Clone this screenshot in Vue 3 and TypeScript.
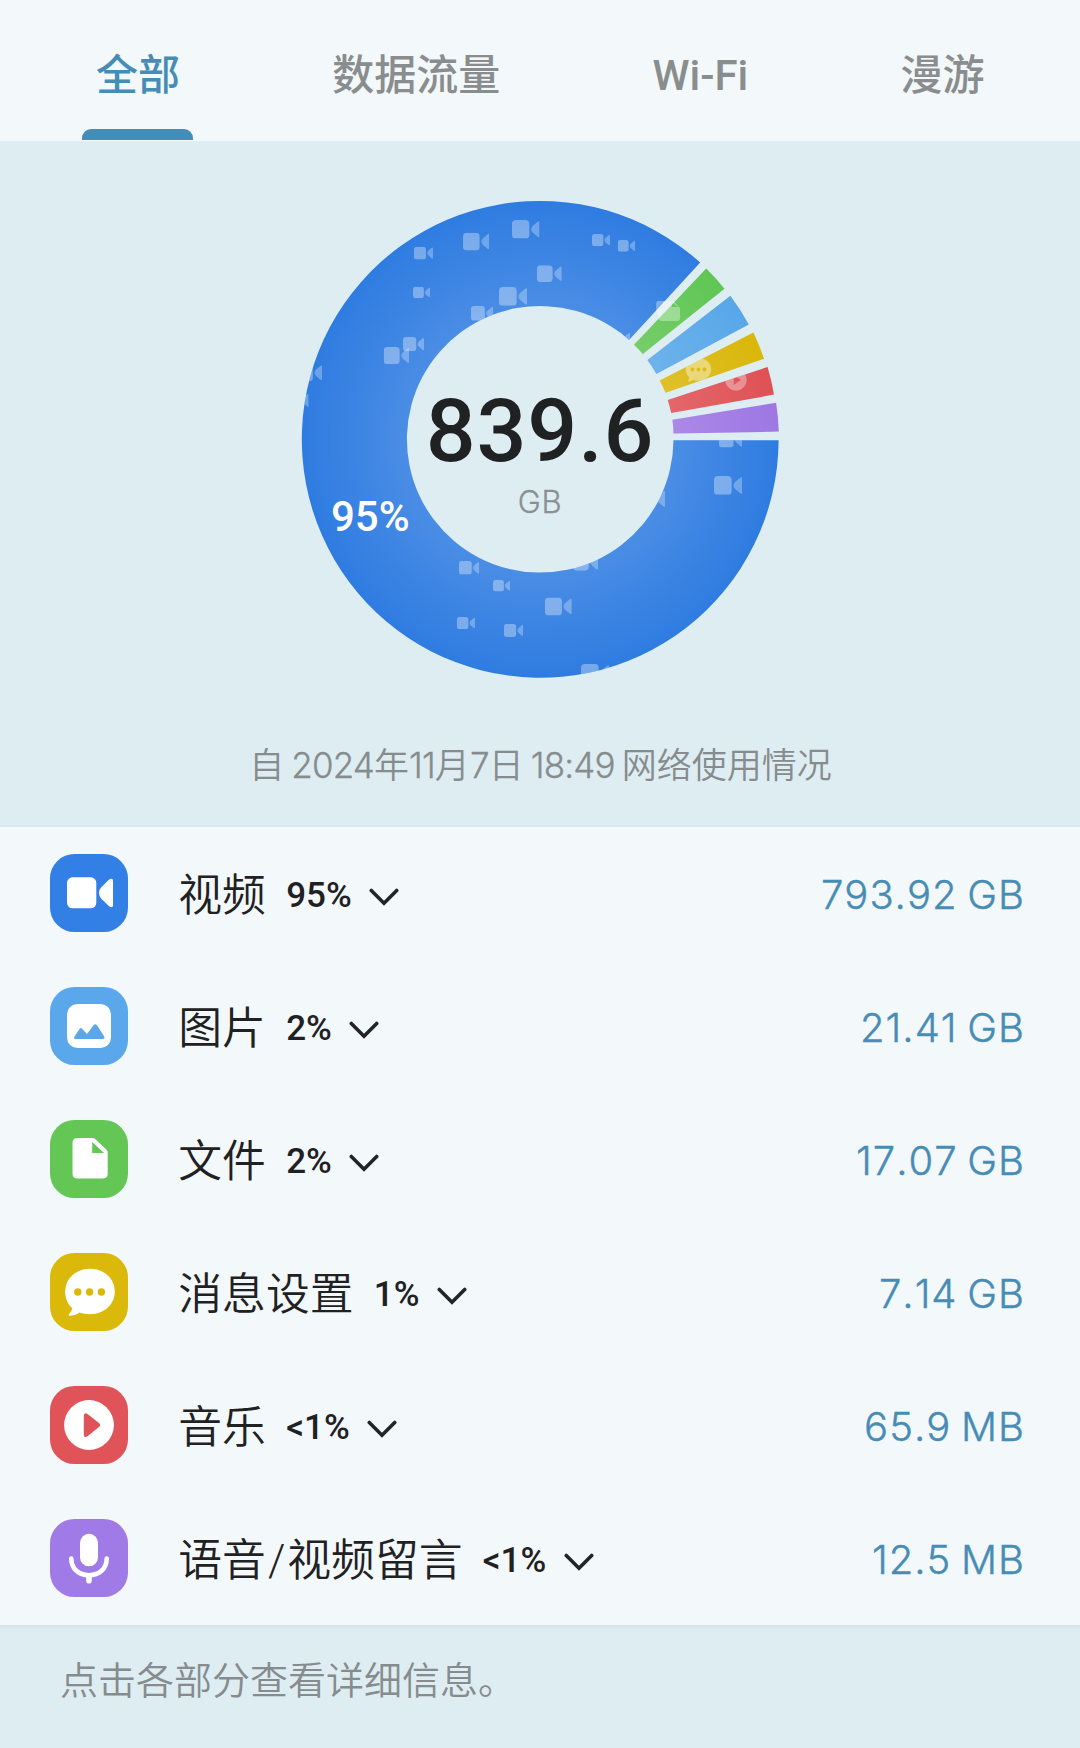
<script setup lang="ts">
type IconName = 'video' | 'image' | 'file' | 'message' | 'music' | 'voice'

interface UsageRow {
  icon: IconName
  name: string
  percent: string
  amount: string
  color: string
}

const tabs: string[] = ['全部', '数据流量', 'Wi-Fi', '漫游']

const rows: UsageRow[] = [
  { icon: 'video', name: '视频', percent: '95%', amount: '793.92 GB', color: '#327fe5' },
  { icon: 'image', name: '图片', percent: '2%', amount: '21.41 GB', color: '#5aa8eb' },
  { icon: 'file', name: '文件', percent: '2%', amount: '17.07 GB', color: '#63c655' },
  { icon: 'message', name: '消息设置', percent: '1%', amount: '7.14 GB', color: '#dbb90a' },
  { icon: 'music', name: '音乐', percent: '<1%', amount: '65.9 MB', color: '#e05459' },
  { icon: 'voice', name: '语音/视频留言', percent: '<1%', amount: '12.5 MB', color: '#a07be7' },
]

const period = '自 2024年11月7日 18:49 网络使用情况'

// Numerals are set slightly tighter than the Chinese text around them
const periodParts: string[] = period.split(/([\d:]+)/)
const nameParts = (name: string): string[] => name.split(/(\/)/)

// Chart space is centred on the ring: outer radius 238.4, inner radius 133.3
const slices = [
  { id: 'video', color: '#2f7ce1', d: 'M238.4 .8A238.4 238.4 0 1 1 160 -176.8L88.8 -99.5A133.3 133.3 0 1 0 133.3 .8Z' },
  { id: 'file', color: '#60c653', d: 'M93.8 -94.7L166 -170.8A238.4 238.4 0 0 1 184.3 -150.7L102.6 -85.4A133.3 133.3 0 0 0 93.8 -94.7Z' },
  { id: 'image', color: '#58a7e9', d: 'M107.2 -79.4L190.2 -143.7A238.4 238.4 0 0 1 208.6 -114.9L116.2 -65.4A133.3 133.3 0 0 0 107.2 -79.4Z' },
  { id: 'message', color: '#dab70a', d: 'M119.5 -59L213.2 -106.8A238.4 238.4 0 0 1 223.9 -80.6L125.3 -46.7A133.3 133.3 0 0 0 119.5 -59Z' },
  { id: 'music', color: '#df5155', d: 'M127.5 -39.4L227.4 -72.4A238.4 238.4 0 0 1 233.8 -44.8L131 -26.4A133.3 133.3 0 0 0 127.5 -39.4Z' },
  { id: 'voice', color: '#9e77e4', d: 'M132.2 -19.6L235.9 -36.6A238.4 238.4 0 0 1 238.6 -7.8L133.3 -5.8A133.3 133.3 0 0 0 132.2 -19.6Z' },
]

// [left, top, width] of each camera scattered over the blue slice
const cameras: [number, number, number][] = [
  [414, 246.7, 19], [463, 232.7, 26.3], [512, 220, 27.5], [413, 286.7, 17.2],
  [471, 306, 22], [499, 287, 28], [537, 265.3, 24.8], [592, 234, 18],
  [617.7, 240, 17.4], [403, 337, 21], [383.7, 347, 25.3], [297.3, 364.5, 24.7],
  [286.7, 393, 22], [609, 332, 21], [719, 432, 23], [714, 476, 28],
  [638, 489.8, 27], [573, 553.8, 25], [545, 597.4, 26.8], [581, 664, 28],
  [459, 561, 20.2], [493, 580, 17.2], [457, 617, 18], [504, 624, 19.2],
]
</script>

<template>
  <main class="screen">
    <svg class="defs" width="0" height="0" aria-hidden="true">
      <defs>
        <symbol id="cam" viewBox="0 0 46 31">
          <rect width="29" height="31" rx="6.500" />
          <path opacity=".85" d="M42.500 3.200Q46 .5 46 4V27Q46 30.500 42.500 27.800L35 21.500Q32 19 32 15.500Q32 12 35 9.500Z" />
        </symbol>
      </defs>
    </svg>

    <nav class="tabs">
      <div v-for="(tab, i) in tabs" :key="tab" class="tab" :class="{ active: i === 0 }">{{ tab }}</div>
    </nav>

    <section class="summary">
      <div class="chart">
        <svg class="ring" viewBox="-240.2 -240.4 480 480" width="480" height="480">
          <defs>
            <radialGradient id="glow" gradientUnits="userSpaceOnUse" cx="0" cy="0" r="238.4">
              <stop offset=".56" stop-color="#fff" stop-opacity=".13" />
              <stop offset="1" stop-color="#fff" stop-opacity="0" />
            </radialGradient>
            <clipPath v-for="s in slices" :id="'clip-' + s.id" :key="s.id"><path :d="s.d" /></clipPath>
          </defs>
          <g v-for="s in slices" :key="s.id">
            <path :d="s.d" :fill="s.color" />
            <path :d="s.d" fill="url(#glow)" />
          </g>
          <g clip-path="url(#clip-video)" fill="#fff" fill-opacity=".34">
            <use
              v-for="(c, i) in cameras" :key="i" href="#cam"
              :x="c[0] - 540.2" :y="c[1] - 439.4" :width="c[2]" :height="c[2] * 0.674"
            />
          </g>
          <path
            fill="#fff" fill-opacity=".34" fill-rule="evenodd"
            d="M118.500 -138.400H133L139.800 -131.500V-121.400Q139.800 -118.400 136.800 -118.400H121.500Q118.800 -118.400 118.400 -121L116 -130V-135.900Q116 -138.400 118.500 -138.400ZM131.500 -137.500V-132.500H138Z"
          />
          <g clip-path="url(#clip-message)">
            <path
              fill="#fff" fill-opacity=".4" fill-rule="evenodd"
              d="M158.200 -81.500C165.400 -81.500 170.900 -76.600 170.900 -70.200C170.900 -63.800 165.400 -58.700 158.200 -58.700C156 -58.700 154.300 -59.100 152.800 -59.700C151.200 -58.500 149.500 -58 147.600 -58C147.200 -58.400 149 -60 149.200 -61.900C146.800 -64.100 145.500 -67 145.500 -70.200C145.500 -76.600 151 -81.500 158.200 -81.500ZM152.200 -71.800a1.900 1.900 0 1 0 .1 0ZM158.200 -71.800a1.900 1.900 0 1 0 .1 0ZM164.200 -71.800a1.900 1.900 0 1 0 .1 0Z"
            />
          </g>
          <path
            clip-path="url(#clip-music)" fill="#fff" fill-opacity=".34" fill-rule="evenodd"
            d="M195.700 -70.100a10.700 10.700 0 1 0 .1 0ZM193.500 -64.500V-54.500L200.700 -59.500Z"
          />
        </svg>
        <div class="total">
          <span class="total-number">839.6</span>
          <span class="total-unit">GB</span>
        </div>
        <span class="share">95%</span>
      </div>
      <p class="period"><span v-for="(part, i) in periodParts" :key="i" :class="{ numeral: i % 2 === 1 }">{{ part }}</span></p>
    </section>

    <ul class="list">
      <li v-for="row in rows" :key="row.name" class="row">
        <svg class="icon" viewBox="0 0 78 78" width="78" height="78">
          <rect width="78" height="78" rx="24.500" :fill="row.color" />
          <g v-if="row.icon === 'video'" fill="#fff">
            <rect x="17" y="23.300" width="29.300" height="31" rx="5.500" />
            <path d="M58.800 25.800Q63 23 63 27V51Q63 55 58.800 52L51.300 44.800Q49 42.500 49 39Q49 35.500 51.300 33.200Z" />
          </g>
          <g v-else-if="row.icon === 'image'">
            <rect x="17" y="17" width="44" height="44" rx="10.500" fill="#fff" />
            <path :fill="row.color" d="M24.500 49.500L29.500 42Q30.800 40 32.200 42L37 47L43.500 38.300Q45.300 36 47 38.300L54.500 50Q55 52 53 52H26Q23.200 52 24.500 49.500Z" />
          </g>
          <g v-else-if="row.icon === 'file'">
            <path fill="#fff" d="M27.500 18H42.500Q44 18 45.200 19L56.300 29.500Q57.700 31 57.700 32.500V53.500Q57.700 58.500 52.700 58.500H27.500Q22.500 58.500 22.500 53.500V23Q22.500 18 27.500 18Z" />
            <path :fill="row.color" d="M42.200 22V33H54Z" />
          </g>
          <g v-else-if="row.icon === 'message'">
            <path fill="#fff" d="M40 15.700C54 15.700 64.800 25.500 64.800 38.500C64.800 51.500 54 61.200 40 61.200C36 61.200 32.500 60.600 29.500 59.600C26.500 62 23 62.800 19.500 62.800C18.500 62.800 18.300 62 19 61.200C21.500 58.500 22 56.500 22.300 55.300C17.500 51 15.200 45 15.200 38.500C15.200 25.500 26 15.700 40 15.700Z" />
            <g :fill="row.color">
              <circle cx="27.800" cy="39" r="3.700" /><circle cx="39.600" cy="39" r="3.700" /><circle cx="51.400" cy="39" r="3.700" />
            </g>
          </g>
          <g v-else-if="row.icon === 'music'">
            <circle cx="39" cy="39" r="24.900" fill="#fff" />
            <path :fill="row.color" d="M37.500 28L49 37Q51.200 39 49 41L37.500 50.300Q33.800 52.500 33.800 48.500V30Q33.800 26 37.500 28Z" />
          </g>
          <g v-else fill="none" stroke="#fff" stroke-linecap="round">
            <rect x="30" y="14.800" width="18" height="32.500" rx="9" fill="#fff" stroke="none" />
            <path stroke-width="4.600" d="M21.300 39.500C21.300 50 29 56.200 39 56.200C49 56.200 56.700 50 56.700 39.500" />
            <path stroke-width="5.600" d="M39 57V61.800" />
          </g>
        </svg>
        <span class="name"><span v-for="(part, i) in nameParts(row.name)" :key="i" :class="{ slash: part === '/' }">{{ part }}</span></span>
        <span class="percent">{{ row.percent }}</span>
        <svg class="chevron" viewBox="0 0 30 18" width="30" height="18">
          <path d="M2.300 2.500L15 15.200L27.700 2.500" fill="none" stroke="#222426" stroke-width="3.600" stroke-linecap="round" />
        </svg>
        <span class="amount">{{ row.amount }}</span>
      </li>
    </ul>

    <footer class="hint">点击各部分查看详细信息。</footer>
  </main>
</template>

<style>
body {
  background: #deedf2;
}
</style>

<style scoped>
.screen {
  display: flex;
  flex-direction: column;
  width: 1080px;
  height: 1748px;
  overflow: hidden;
  background: #deedf2;
  color: #1f2123;
  font-family: Roboto, "Noto Sans CJK SC", sans-serif;
}
.defs {
  position: absolute;
}
.tabs {
  display: flex;
  justify-content: space-between;
  box-sizing: border-box;
  height: 141px;
  padding: 0 95.500px 0 96px;
  background: #f3f8fb;
}
.tab {
  position: relative;
  color: #8a8d8e;
  font-size: 42px;
  font-weight: 500;
  line-height: 151px;
  white-space: nowrap;
}
.tab.active {
  color: #468db6;
}
.tab.active::after {
  content: "";
  position: absolute;
  left: -14px;
  top: 129px;
  width: 111px;
  height: 11px;
  border-radius: 9px 9px 0 0;
  background: #438eb8;
}
.summary {
  display: flex;
  flex-direction: column;
  align-items: center;
  box-sizing: border-box;
  height: 686px;
  padding-top: 58px;
  border-bottom: 2px solid #d9e8ef;
}
.chart {
  position: relative;
  width: 480px;
  height: 480px;
}
.ring {
  display: block;
}
.total {
  position: absolute;
  inset: 0;
  display: flex;
  flex-direction: column;
  align-items: center;
  justify-content: center;
  padding-top: 30px;
}
.total-number {
  font-size: 88px;
  font-weight: 500;
  line-height: 88px;
  letter-spacing: 0.800px;
}
.total-unit {
  margin-top: 7px;
  color: #8a9092;
  font-family: Inter, sans-serif;
  font-size: 31px;
  font-weight: 350;
  line-height: 40px;
  letter-spacing: 0.600px;
  -webkit-text-stroke: 0.300px currentColor;
}
.share {
  position: absolute;
  left: 31px;
  top: 293px;
  color: #fff;
  font-size: 42px;
  font-weight: 500;
  line-height: 50px;
}
.period {
  margin: 60px 0 0;
  padding-left: 1px;
  color: #868c8d;
  font-family: Inter, "Noto Sans CJK SC", sans-serif;
  font-size: 35px;
  font-weight: 350;
  line-height: 52px;
  word-spacing: -2.700px;
  white-space: pre;
}
.numeral {
  letter-spacing: -0.850px;
  -webkit-text-stroke: 0.300px currentColor;
}
.list {
  margin: 0;
  padding: 0;
  list-style: none;
  background: #f3f8fb;
}
.row {
  display: flex;
  align-items: center;
  height: 133px;
  padding: 0 56px 0 50px;
}
.icon {
  flex: none;
  margin-bottom: 2px;
}
.name {
  margin: 4px 0 0 50.300px;
  font-size: 43.800px;
  font-weight: 350;
  line-height: 64px;
  white-space: nowrap;
}
.slash {
  padding: 0 2px;
}
.percent {
  margin: 4px 0 0 20.300px;
  font-size: 35px;
  font-weight: 500;
  line-height: 44px;
}
.chevron {
  margin: 7px 0 0 17.500px;
}
.amount {
  margin: 2px -1px 0 auto;
  color: #478cb5;
  font-family: Inter, sans-serif;
  font-size: 40px;
  font-weight: 350;
  line-height: 48px;
  font-kerning: none;
  letter-spacing: 1px;
  word-spacing: -2.500px;
  -webkit-text-stroke: 0.400px currentColor;
}
.hint {
  flex: 1;
  padding: 28px 60px 0;
  background: linear-gradient(#d3e2e9, #deedf2 4px);
  color: #868c8d;
  font-size: 38px;
  font-weight: 350;
  line-height: 56px;
}
</style>
